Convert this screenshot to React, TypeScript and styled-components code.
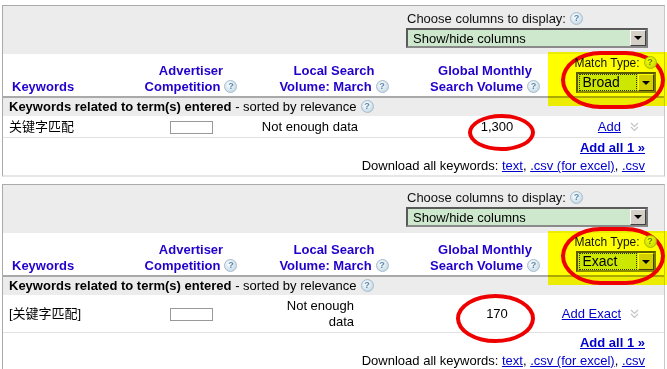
import React from "react";
import styled, { createGlobalStyle } from "styled-components";

const GlobalStyle = createGlobalStyle`
  body {
    margin: 0;
    background: #fff;
    font-family: "Liberation Sans", Arial, "Noto Sans CJK SC", sans-serif;
    font-size: 13px;
    color: #000;
  }
`;

const COLS = "138px 100px 180px 128px 117px";

const Page = styled.div`
  padding: 5px 0 0 2px;
  display: flex;
  flex-direction: column;
  gap: 7px;
`;

const Panel = styled.div`
  width: 663px;
  box-sizing: border-box;
  border-top: 1px solid #aaa;
  border-left: 1px solid #aaa;
  border-right: 1px solid #c8c8c8;
  border-bottom: 2px solid #e6e6e6;
  position: relative;
`;

const TopBar = styled.div`
  height: 48px;
  background: #ececec;
  display: flex;
  justify-content: flex-end;
  padding: 5px 16px 0 0;
  box-sizing: border-box;
`;

const ColumnChooser = styled.div`
  width: 242px;
  display: flex;
  flex-direction: column;
`;

const ChooserLabel = styled.div`
  line-height: 16px;
  padding-left: 1px;
  color: #111;
`;

const FakeSelect = styled.div<{ $w: number; $h: number; $size: number }>`
  width: ${(p) => p.$w}px;
  height: ${(p) => p.$h}px;
  box-sizing: border-box;
  margin-top: 1px;
  border: 2px solid #5a5a5a;
  border-bottom-color: #8a8a8a;
  border-right-color: #7a7a7a;
  background: #cde8cd;
  display: flex;
  align-items: center;
  justify-content: space-between;
  font-size: ${(p) => p.$size}px;
`;

const SelectText = styled.span<{ $focus?: boolean }>`
  flex: ${(p) => (p.$focus ? 1 : "none")};
  padding: 0 3px;
  margin: 0 1px 0 1px;
  line-height: 15px;
  border: 1px dotted ${(p) => (p.$focus ? "#333" : "transparent")};
`;

const DropButton = styled.div`
  width: 16px;
  align-self: stretch;
  box-sizing: border-box;
  background: #d4d0c8;
  border: 1px solid;
  border-color: #fff #404040 #404040 #fff;
  display: flex;
  align-items: center;
  justify-content: center;
  &::after {
    content: "";
    border-left: 4px solid transparent;
    border-right: 4px solid transparent;
    border-top: 4px solid #000;
  }
`;

// $tint: the icon that sits under the yellow marker (already multiplied by yellow)
const HelpIcon = styled.span<{ $tint?: boolean }>`
  display: inline-block;
  width: 13px;
  height: 13px;
  box-sizing: border-box;
  border-radius: 50%;
  border: 1px solid ${(p) => (p.$tint ? "#a3bc00" : "#a3bccd")};
  background: ${(p) =>
    p.$tint
      ? "radial-gradient(circle at 40% 35%, #ffff00 0%, #d3e200 60%, #bcd200 100%)"
      : "radial-gradient(circle at 40% 35%, #ffffff 0%, #d3e2ec 60%, #bcd2e0 100%)"};
  color: ${(p) => (p.$tint ? "#5c8800" : "#5c88a8")};
  font-size: 9px;
  font-weight: bold;
  line-height: 11px;
  text-align: center;
  vertical-align: middle;
  margin: -2px 0 0 4px;
`;

const HeaderRow = styled.div`
  display: grid;
  grid-template-columns: ${COLS};
  height: 42px;
  align-items: end;
  border-bottom: 2px solid #a9a9a9;
  box-sizing: content-box;
`;

const HeadCell = styled.div<{ $align?: string; $pl?: number }>`
  color: #2200cc;
  font-weight: bold;
  line-height: 16px;
  padding-bottom: 1px;
  text-align: ${(p) => p.$align || "center"};
  padding-left: ${(p) => p.$pl || 0}px;
`;

const MatchCell = styled.div`
  position: relative;
  align-self: stretch;
  display: flex;
  flex-direction: column;
  align-items: center;
  padding: 2px 0 0 16px;
`;

const MatchLabel = styled.div`
  font-size: 12px;
  line-height: 15px;
  color: #111;
  position: relative;
  z-index: 4;
`;

const Highlight = styled.div`
  position: absolute;
  left: -1px;
  top: -2px;
  width: 120px;
  height: 54px;
  background: #ffff00;
  mix-blend-mode: multiply;
  z-index: 2;
  pointer-events: none;
`;

const RedRing = styled.div<{ $l: number; $t: number; $w: number; $h: number; $square?: boolean }>`
  position: absolute;
  left: ${(p) => p.$l}px;
  top: ${(p) => p.$t}px;
  width: ${(p) => p.$w}px;
  height: ${(p) => p.$h}px;
  box-sizing: border-box;
  border: 4px solid #ee0000;
  border-radius: ${(p) => (p.$square ? "38% / 50%" : "50%")};
  z-index: 3;
  pointer-events: none;
`;

const GroupRow = styled.div`
  height: 18px;
  line-height: 18px;
  background: #ececec;
  padding-left: 6px;
`;

const DataRow = styled.div`
  display: grid;
  grid-template-columns: ${COLS};
  align-items: center;
  line-height: 16px;
  padding: 3px 0 2px;
  border-bottom: 1px solid #e2e2e2;
`;

const KeywordCell = styled.div`
  padding-left: 6px;
`;

const BarCell = styled.div`
  display: flex;
  justify-content: center;
`;

const CompetitionBar = styled.div`
  width: 43px;
  height: 13px;
  box-sizing: border-box;
  border: 1px solid #999;
  background: #fff;
`;

const LocalCell = styled.div<{ $narrow?: boolean }>`
  display: flex;
  justify-content: flex-end;
  padding-right: ${(p) => (p.$narrow ? 67 : 63)}px;
  & > span {
    text-align: right;
    max-width: ${(p) => (p.$narrow ? "72px" : "none")};
  }
`;

const VolumeCell = styled.div`
  position: relative;
  text-align: center;
  padding-left: 24px;
`;

const ActionCell = styled.div`
  display: flex;
  justify-content: flex-end;
  align-items: center;
  gap: 9px;
  padding-right: 27px;
`;

const Link = styled.a<{ $bold?: boolean }>`
  color: #0000cc;
  text-decoration: underline;
  font-weight: ${(p) => (p.$bold ? "bold" : "normal")};
  cursor: pointer;
`;

const Footer = styled.div`
  text-align: right;
  padding: 1px 19px 0 0;
  line-height: 18px;
`;

const Chevrons = () => (
  <svg width="9" height="10" viewBox="0 0 9 10">
    <polyline points="1,1 4.5,4.5 8,1" fill="none" stroke="#c4c4c4" strokeWidth="1.2" />
    <polyline points="1,5 4.5,8.5 8,5" fill="none" stroke="#c4c4c4" strokeWidth="1.2" />
  </svg>
);

interface Ring {
  l: number;
  t: number;
  w: number;
  h: number;
}

interface ResultProps {
  keyword: string;
  matchType: string;
  volume: string;
  addLabel: string;
  narrow?: boolean;
  matchRing: Ring;
  volumeRing: Ring;
}

const ResultPanel: React.FC<ResultProps> = ({ keyword, matchType, volume, addLabel, narrow, matchRing, volumeRing }) => {
  return (
    <Panel>
      <TopBar>
        <ColumnChooser>
          <ChooserLabel>
            Choose columns to display:<HelpIcon>?</HelpIcon>
          </ChooserLabel>
          <FakeSelect $w={242} $h={20} $size={13}>
            <SelectText>Show/hide columns</SelectText>
            <DropButton />
          </FakeSelect>
        </ColumnChooser>
      </TopBar>
      <HeaderRow>
        <HeadCell $align="left" $pl={9}>Keywords</HeadCell>
        <HeadCell>
          Advertiser
          <br />
          Competition<HelpIcon>?</HelpIcon>
        </HeadCell>
        <HeadCell $pl={6}>
          Local Search
          <br />
          Volume: March<HelpIcon>?</HelpIcon>
        </HeadCell>
        <HeadCell>
          Global Monthly
          <br />
          Search Volume<HelpIcon>?</HelpIcon>
        </HeadCell>
        <MatchCell>
          <Highlight />
          <RedRing $square $l={matchRing.l} $t={matchRing.t} $w={matchRing.w} $h={matchRing.h} />
          <MatchLabel>
            Match Type:<HelpIcon $tint>?</HelpIcon>
          </MatchLabel>
          <FakeSelect $w={80} $h={21} $size={14}>
            <SelectText $focus>{matchType}</SelectText>
            <DropButton />
          </FakeSelect>
        </MatchCell>
      </HeaderRow>
      <GroupRow>
        <b>Keywords related to term(s) entered</b> - sorted by relevance<HelpIcon>?</HelpIcon>
      </GroupRow>
      <DataRow>
        <KeywordCell>{keyword}</KeywordCell>
        <BarCell>
          <CompetitionBar />
        </BarCell>
        <LocalCell $narrow={narrow}>
          <span>Not enough data</span>
        </LocalCell>
        <VolumeCell>
          {volume}
          <RedRing $l={volumeRing.l} $t={volumeRing.t} $w={volumeRing.w} $h={volumeRing.h} />
        </VolumeCell>
        <ActionCell>
          <Link>{addLabel}</Link>
          <Chevrons />
        </ActionCell>
      </DataRow>
      <Footer>
        <div>
          <Link $bold>Add all 1 »</Link>
        </div>
        <div>
          Download all keywords: <Link>text</Link>, <Link>.csv (for excel)</Link>, <Link>.csv</Link>
        </div>
      </Footer>
    </Panel>
  );
};

export default function App() {
  return (
    <>
      <GlobalStyle />
      <Page>
        <ResultPanel
          keyword="关键字匹配"
          matchType="Broad"
          volume="1,300"
          addLabel="Add"
          matchRing={{ l: 12, t: -3, w: 104, h: 58 }}
          volumeRing={{ l: 47, t: -5, w: 67, h: 37 }}
        />
        <ResultPanel
          keyword="[关键字匹配]"
          matchType="Exact"
          volume="170"
          addLabel="Add Exact"
          narrow
          matchRing={{ l: 12, t: -6, w: 104, h: 58 }}
          volumeRing={{ l: 35, t: -12, w: 79, h: 49 }}
        />
      </Page>
    </>
  );
}
